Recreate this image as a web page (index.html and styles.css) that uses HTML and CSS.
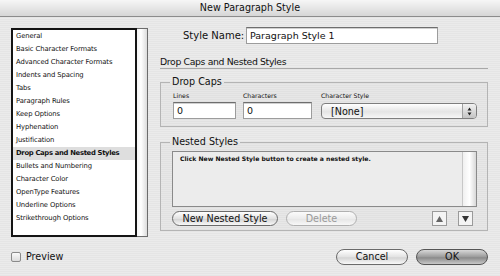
FILE: index.html
```html
<!DOCTYPE html>
<html lang="en">

<head>
    <meta charset="UTF-8">
    <meta name="viewport" content="width=device-width, initial-scale=1.0">
    <title>New Paragraph Style</title>
    <link rel="stylesheet" href="styles.css">
</head>

<body>
    <div class="dialog">
        <div class="titlebar">New Paragraph Style</div>

        <div class="content">
            <div class="sidebar">
                <div class="category-box">
                    <ul class="category-list">
                        <li class="category-item">General</li>
                        <li class="category-item">Basic Character Formats</li>
                        <li class="category-item">Advanced Character Formats</li>
                        <li class="category-item">Indents and Spacing</li>
                        <li class="category-item">Tabs</li>
                        <li class="category-item">Paragraph Rules</li>
                        <li class="category-item">Keep Options</li>
                        <li class="category-item">Hyphenation</li>
                        <li class="category-item">Justification</li>
                        <li class="category-item category-item--selected">Drop Caps and Nested Styles</li>
                        <li class="category-item">Bullets and Numbering</li>
                        <li class="category-item">Character Color</li>
                        <li class="category-item">OpenType Features</li>
                        <li class="category-item">Underline Options</li>
                        <li class="category-item">Strikethrough Options</li>
                    </ul>
                    <div class="scroll-track"></div>
                </div>
            </div>

            <div class="panel">
                <div class="name-row">
                    <label class="name-row__label">Style Name:</label>
                    <div class="text-field name-row__field">Paragraph Style 1</div>
                </div>

                <h2 class="section-title">Drop Caps and Nested Styles</h2>

                <fieldset class="group">
                    <legend class="group__legend">Drop Caps</legend>
                    <div class="drop-caps">
                        <div class="field field--lines">
                            <span class="field__label">Lines</span>
                            <div class="text-field">0</div>
                        </div>
                        <div class="field field--chars">
                            <span class="field__label">Characters</span>
                            <div class="text-field">0</div>
                        </div>
                        <div class="field field--style">
                            <span class="field__label">Character Style</span>
                            <div class="popup">
                                <span class="popup__value">[None]</span>
                                <span class="popup__arrows">
                                    <svg width="5" height="9" viewBox="0 0 5 9">
                                        <path d="M2.5 0.5L4.5 3.5H0.5Z M2.5 8.5L4.5 5.5H0.5Z" fill="#222" />
                                    </svg>
                                </span>
                            </div>
                        </div>
                    </div>
                </fieldset>

                <fieldset class="group group--nested">
                    <legend class="group__legend">Nested Styles</legend>
                    <div class="nested-box">
                        <div class="nested-box__text">Click New Nested Style button to create a nested style.</div>
                        <div class="nested-box__scroll"></div>
                    </div>
                    <div class="nested-actions">
                        <button class="pill-button nested-actions__new">New Nested Style</button>
                        <button class="pill-button pill-button--disabled nested-actions__delete">Delete</button>
                        <span class="nested-actions__spacer"></span>
                        <button class="arrow-button">
                            <svg width="7" height="6" viewBox="0 0 7 6"><path d="M3.5 0L7 6H0Z" fill="#666" /></svg>
                        </button>
                        <button class="arrow-button">
                            <svg width="7" height="6" viewBox="0 0 7 6"><path d="M0 0H7L3.5 6Z" fill="#333" /></svg>
                        </button>
                    </div>
                </fieldset>
            </div>
        </div>

        <div class="footer">
            <label class="preview">
                <span class="preview__box"></span>
                Preview
            </label>
            <span class="footer__spacer"></span>
            <button class="pill-button footer__button">Cancel</button>
            <button class="pill-button pill-button--default footer__button">OK</button>
        </div>
    </div>
</body>

</html>
```

FILE: styles.css
```css
:root {
    --ink: #111111;
    --muted-ink: #9a9a9a;
    --frame: #8a8a8a;
    --group-line: #b4b4b4;
    --field-bg: #ffffff;
    --stripe-a: #ebebeb;
    --stripe-b: #e5e5e5;
}

* {
    box-sizing: border-box;
}

body {
    margin: 0;
    width: 500px;
    height: 276px;
    overflow: hidden;
    font-family: 'DejaVu Sans', sans-serif;
    color: var(--ink);
    background: repeating-linear-gradient(var(--stripe-a) 0 1px, var(--stripe-b) 1px 2px);
}

.dialog {
    display: flex;
    flex-direction: column;
    height: 100%;
}

.titlebar {
    height: 17px;
    line-height: 16px;
    text-align: center;
    font-size: 9.6px;
    background: linear-gradient(#f6f6f6, #d6d6d6);
    border-bottom: 1px solid #8c8c8c;
}

.content {
    display: flex;
    padding: 10px 12px 0 11px;
}

/* category list */

.sidebar {
    width: 137px;
    padding-top: 1px;
}

.category-box {
    display: flex;
    height: 209px;
}

.category-list {
    list-style: none;
    margin: 0;
    padding: 0;
    width: 126px;
    border: 2px solid #141414;
    background-color: var(--field-bg);
}

.category-item {
    height: 13px;
    line-height: 13px;
    padding-left: 3px;
    font-size: 6.8px;
    letter-spacing: -0.1px;
    white-space: nowrap;
}

.category-item--selected {
    background-color: #dedede;
    font-weight: 700;
    letter-spacing: -0.3px;
}

.scroll-track {
    width: 11px;
    border: 1px solid #6c6c6c;
    border-left: none;
    background: linear-gradient(90deg, #f4f4f4, #ffffff 40%, #dcdcdc);
}

/* right panel */

.panel {
    margin-left: 12px;
    width: 328px;
}

.name-row {
    display: flex;
    align-items: center;
    padding-left: 23px;
    height: 17px;
}

.name-row__label {
    font-size: 10px;
    width: 62px;
}

.name-row__field {
    width: 192px;
    height: 17px;
    margin-left: 1px;
}

.text-field {
    height: 17px;
    padding-left: 3px;
    font-size: 9.5px;
    line-height: 16px;
    background-color: var(--field-bg);
    border: 1px solid #9c9c9c;
    border-top-color: #6e6e6e;
    box-shadow: inset 0 1px 0 #d0d0d0;
}

.section-title {
    margin: 11px 0 0;
    font-size: 9.3px;
    font-weight: 400;
    letter-spacing: -0.35px;
    line-height: 13px;
    border-bottom: 1px solid #a8a8a8;
}

.group {
    margin: 7px 0 0;
    padding: 0 10px 7px 11px;
    border: 1px solid var(--group-line);
    background-color: rgba(0, 0, 0, 0.015);
}

.group__legend {
    padding: 0 2px;
    margin-left: -2px;
    font-size: 9.6px;
    line-height: 12px;
}

.drop-caps {
    display: flex;
    padding-top: 4px;
}

.field {
    display: flex;
    flex-direction: column;
}

.field__label {
    font-size: 6.2px;
    line-height: 8px;
    margin-bottom: 2px;
}

.field--lines {
    width: 63px;
    margin-left: 1px;
}

.field--chars {
    width: 69px;
    margin-left: 7px;
}

.field--style {
    width: 156px;
    margin-left: 9px;
}

.popup {
    display: flex;
    align-items: center;
    height: 16px;
    margin-top: 1px;
    border: 1px solid #7e7e7e;
    border-radius: 4px;
    background: linear-gradient(#ffffff, #e4e4e4 55%, #f6f6f6);
    overflow: hidden;
}

.popup__value {
    flex: 1;
    padding-left: 9px;
    font-size: 9.6px;
}

.popup__arrows {
    display: flex;
    align-items: center;
    justify-content: center;
    width: 14px;
    height: 100%;
    border-left: 1px solid #a0a0a0;
    background: linear-gradient(#f2f2f2, #c4c4c4);
}

/* nested styles */

.group--nested {
    margin-top: 9px;
    padding-bottom: 4px;
}

.nested-box {
    display: flex;
    height: 56px;
    margin-top: 3px;
    border: 1px solid #8a8a8a;
    background-color: #ececec;
}

.nested-box__text {
    flex: 1;
    padding: 3px 0 0 7px;
    font-size: 6.1px;
    font-weight: 700;
}

.nested-box__scroll {
    width: 14px;
    border-left: 1px solid #c8c8c8;
    background: linear-gradient(90deg, #f0f0f0, #ffffff 50%, #d8d8d8);
}

.nested-actions {
    display: flex;
    align-items: center;
    margin-top: 4px;
    padding-right: 4px;
}

.nested-actions__spacer,
.footer__spacer {
    flex: 1;
}

.pill-button {
    height: 15px;
    padding: 0;
    font-family: inherit;
    font-size: 9.6px;
    line-height: 13px;
    color: var(--ink);
    border: 1px solid #6a6a6a;
    border-radius: 8px;
    background: linear-gradient(#ffffff, #e2e2e2 50%, #d4d4d4 55%, #f8f8f8);
}

.pill-button--disabled {
    color: var(--muted-ink);
    border-color: #b0b0b0;
    background: linear-gradient(#fbfbfb, #ececec 50%, #e6e6e6 55%, #f8f8f8);
}

.pill-button--default {
    border-color: #555555;
    background: linear-gradient(#d8d8d8, #9a9a9a 50%, #8a8a8a 55%, #c8c8c8);
}

.nested-actions__new {
    width: 106px;
}

.nested-actions__delete {
    width: 71px;
    margin-left: 8px;
}

.arrow-button {
    display: flex;
    align-items: center;
    justify-content: center;
    width: 15px;
    height: 15px;
    padding: 0;
    margin-left: 11px;
    border: 1px solid #9a9a9a;
    background-color: #f4f4f4;
}

/* footer */

.footer {
    display: flex;
    align-items: center;
    height: 17px;
    margin-top: 11px;
    padding: 0 12px 0 11px;
}

.preview {
    display: flex;
    align-items: center;
    font-size: 9.6px;
}

.preview__box {
    width: 10px;
    height: 10px;
    margin-right: 5px;
    border: 1px solid #8a8a8a;
    border-radius: 2px;
    background: linear-gradient(#fafafa, #dcdcdc);
}

.footer__button {
    width: 72px;
    height: 16px;
    margin-left: 8px;
}
```
